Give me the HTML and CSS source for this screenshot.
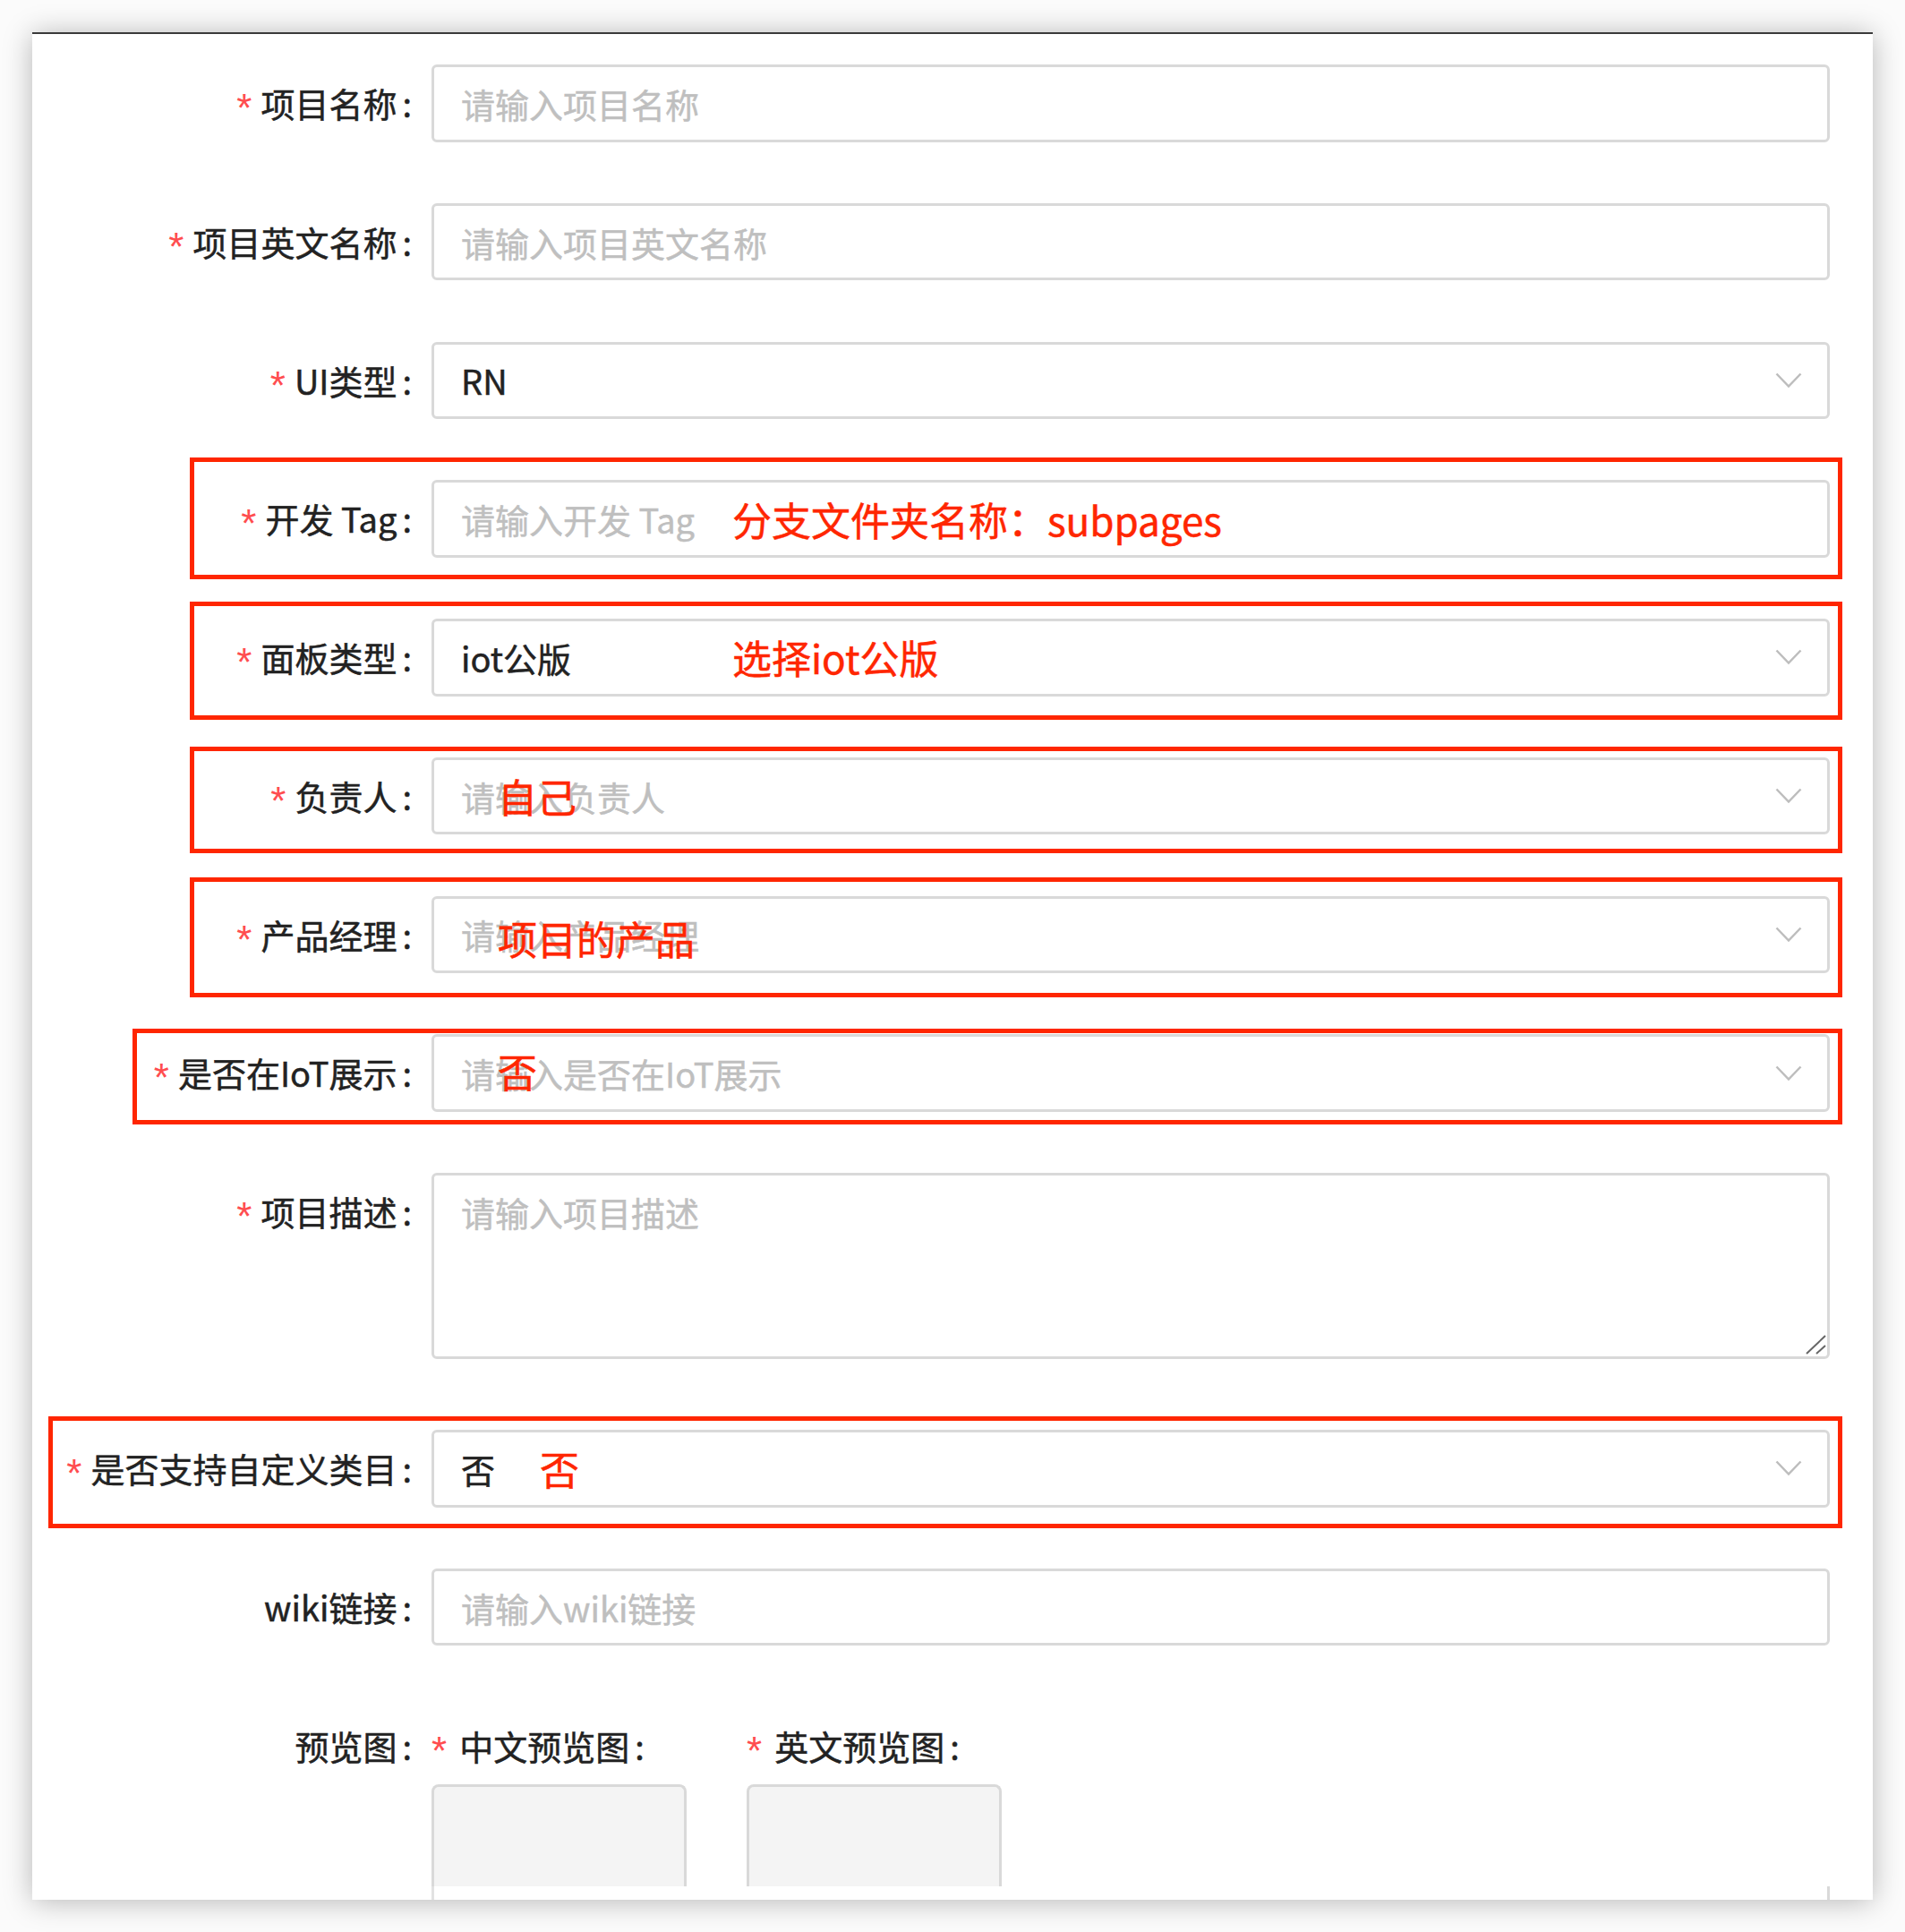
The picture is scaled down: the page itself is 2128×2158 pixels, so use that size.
FILE: index.html
```html
<!DOCTYPE html>
<html lang="zh-CN">
<head>
    <meta charset="UTF-8">
    <meta name="viewport" content="width=device-width, initial-scale=1.0">
    <title>新建项目</title>
    <link rel="stylesheet" href="styles.css">
</head>
<body>
    <div class="card">
        <div class="form-item">
            <label class="form-label required">项目名称</label>
            <div class="form-control">
                <input class="input" type="text" placeholder="请输入项目名称">
            </div>
        </div>

        <div class="form-item">
            <label class="form-label required">项目英文名称</label>
            <div class="form-control">
                <input class="input" type="text" placeholder="请输入项目英文名称">
            </div>
        </div>

        <div class="form-item">
            <label class="form-label required">UI类型</label>
            <div class="form-control">
                <div class="input select">
                    <span class="select-value">RN</span>
                    <svg class="chevron" viewBox="0 0 30 18"><polyline points="1.5,1.5 15,15.5 28.5,1.5"/></svg>
                </div>
            </div>
        </div>

        <div class="form-item">
            <label class="form-label required">开发 Tag</label>
            <div class="form-control">
                <input class="input" type="text" placeholder="请输入开发 Tag">
                <span class="note note-tag">分支文件夹名称：subpages</span>
            </div>
            <div class="mark mark-tag"></div>
        </div>

        <div class="form-item">
            <label class="form-label required">面板类型</label>
            <div class="form-control">
                <div class="input select">
                    <span class="select-value">iot公版</span>
                    <svg class="chevron" viewBox="0 0 30 18"><polyline points="1.5,1.5 15,15.5 28.5,1.5"/></svg>
                </div>
                <span class="note note-panel">选择iot公版</span>
            </div>
            <div class="mark mark-panel"></div>
        </div>

        <div class="form-item">
            <label class="form-label required">负责人</label>
            <div class="form-control">
                <div class="input select">
                    <span class="select-value placeholder">请输入负责人</span>
                    <svg class="chevron" viewBox="0 0 30 18"><polyline points="1.5,1.5 15,15.5 28.5,1.5"/></svg>
                </div>
                <span class="note note-owner">自己</span>
            </div>
            <div class="mark mark-owner"></div>
        </div>

        <div class="form-item">
            <label class="form-label required">产品经理</label>
            <div class="form-control">
                <div class="input select">
                    <span class="select-value placeholder">请输入产品经理</span>
                    <svg class="chevron" viewBox="0 0 30 18"><polyline points="1.5,1.5 15,15.5 28.5,1.5"/></svg>
                </div>
                <span class="note note-pm">项目的产品</span>
            </div>
            <div class="mark mark-pm"></div>
        </div>

        <div class="form-item">
            <label class="form-label required">是否在IoT展示</label>
            <div class="form-control">
                <div class="input select">
                    <span class="select-value placeholder">请输入是否在IoT展示</span>
                    <svg class="chevron" viewBox="0 0 30 18"><polyline points="1.5,1.5 15,15.5 28.5,1.5"/></svg>
                </div>
                <span class="note note-iot">否</span>
            </div>
            <div class="mark mark-iot"></div>
        </div>

        <div class="form-item item-textarea">
            <label class="form-label required">项目描述</label>
            <div class="form-control">
                <textarea class="input textarea" placeholder="请输入项目描述"></textarea>
                <svg class="grip" viewBox="0 0 24 22">
                    <line x1="23" y1="1" x2="2" y2="21"/>
                    <line x1="23" y1="12" x2="13" y2="21"/>
                </svg>
            </div>
        </div>

        <div class="form-item">
            <label class="form-label required">是否支持自定义类目</label>
            <div class="form-control">
                <div class="input select">
                    <span class="select-value">否</span>
                    <svg class="chevron" viewBox="0 0 30 18"><polyline points="1.5,1.5 15,15.5 28.5,1.5"/></svg>
                </div>
                <span class="note note-cat">否</span>
            </div>
            <div class="mark mark-cat"></div>
        </div>

        <div class="form-item">
            <label class="form-label">wiki链接</label>
            <div class="form-control">
                <input class="input" type="text" placeholder="请输入wiki链接">
            </div>
        </div>

        <div class="form-item preview-item">
            <label class="form-label">预览图</label>
            <div class="form-control preview-cols">
                <div class="preview-col">
                    <div class="sub-label required">中文预览图</div>
                    <div class="upload"></div>
                </div>
                <div class="preview-col">
                    <div class="sub-label required">英文预览图</div>
                    <div class="upload"></div>
                </div>
            </div>
        </div>
        <div class="cut-edge"></div>
    </div>
</body>
</html>
```

FILE: styles.css
```css
body {
    margin: 0;
    background-color: #fbfbfb;
    font-family: "Noto Sans CJK SC", "Liberation Sans", sans-serif;
    -webkit-text-stroke: 0.5px;
}
.card {
    position: relative;
    margin: 36px;
    height: 2086px;
    box-sizing: border-box;
    padding-top: 34px;
    background-color: #ffffff;
    border-top: 2px solid #3a3a3a;
    box-shadow: 0 2px 30px rgba(0, 0, 0, 0.28);
    overflow: hidden;
}
.form-item {
    display: flex;
    position: relative;
    margin-bottom: 68.25px;
}
.form-label {
    flex: none;
    width: 446px;
    height: 86.5px;
    line-height: 86.5px;
    text-align: right;
    font-size: 38px;
    color: #222222;
    white-space: nowrap;
}
.required::before {
    content: "*";
    display: inline-block;
    position: relative;
    top: 5px;
    margin-right: 10px;
    font-family: "Liberation Sans", sans-serif;
    font-size: 44px;
    color: #ff4d4f;
    -webkit-text-stroke: 0;
}
.form-label::after, .sub-label::after {
    content: ":";
    margin: 0 22px 0 6px;
}
.form-control {
    flex: 1;
    position: relative;
    padding-right: 48px;
}
.input {
    display: block;
    box-sizing: border-box;
    width: 100%;
    height: 86.5px;
    margin: 0;
    padding: 0 30px;
    border: 3px solid #d9d9d9;
    border-radius: 6px;
    background-color: #ffffff;
    font-family: inherit;
    font-size: 38px;
    color: #222222;
    outline: none;
}
.input::placeholder {
    color: #bfbfbf;
}
.select {
    display: flex;
    align-items: center;
    padding-right: 28px;
}
.select-value {
    flex: 1;
    white-space: nowrap;
}
.placeholder {
    color: #bfbfbf;
}
.chevron {
    width: 30px;
    height: 18px;
    fill: none;
    stroke: #bdbdbd;
    stroke-width: 2.5;
}
.item-textarea {
    margin-bottom: 79px;
}
.textarea {
    height: 208px;
    padding-top: 11px;
    line-height: 60px;
    resize: none;
}
.grip {
    position: absolute;
    right: 52px;
    bottom: 5px;
    width: 24px;
    height: 22px;
    stroke: #666666;
    stroke-width: 2;
}

/* red annotations drawn over the screenshot */
.note {
    position: absolute;
    top: 50%;
    transform: translateY(-50%);
    font-size: 44px;
    line-height: 1;
    color: #ff2600;
    white-space: nowrap;
}
.note-tag, .note-panel {
    left: 336px;
}
.note-owner, .note-iot {
    left: 74px;
}
.note-pm {
    left: 74px;
    margin-top: 4px;
}
.note-iot {
    margin-top: -3px;
}
.note-cat {
    left: 121px;
}
.mark {
    position: absolute;
    right: 34px;
    left: 176px;
    border: 5px solid #ff2600;
    pointer-events: none;
}
.mark-tag {
    top: -25.5px;
    bottom: -24.5px;
}
.mark-panel {
    top: -19.5px;
    bottom: -26.5px;
}
.mark-owner {
    top: -12px;
    bottom: -20.5px;
}
.mark-pm {
    top: -20.5px;
    bottom: -27px;
}
.mark-iot {
    left: 112px;
    top: -6px;
    bottom: -14.5px;
}
.mark-cat {
    left: 18px;
    top: -15px;
    bottom: -23.5px;
}

.preview-item {
    margin-bottom: 0;
}
.preview-cols {
    display: flex;
}
.preview-col {
    width: 352px;
}
.sub-label {
    height: 86.5px;
    line-height: 86.5px;
    font-size: 38px;
    color: #222222;
    white-space: nowrap;
}
.sub-label.required::before {
    margin-right: 14px;
}
.upload {
    width: 285px;
    height: 114px;
    box-sizing: border-box;
    border: 3px solid #d9d9d9;
    border-bottom: none;
    border-radius: 8px 8px 0 0;
    background-color: #f4f4f4;
}
.cut-edge {
    height: 30px;
    margin-left: 446px;
    margin-right: 48px;
    border-left: 3px solid #e2e2e2;
    border-right: 3px solid #d9d9d9;
    background-color: #ffffff;
}
```
